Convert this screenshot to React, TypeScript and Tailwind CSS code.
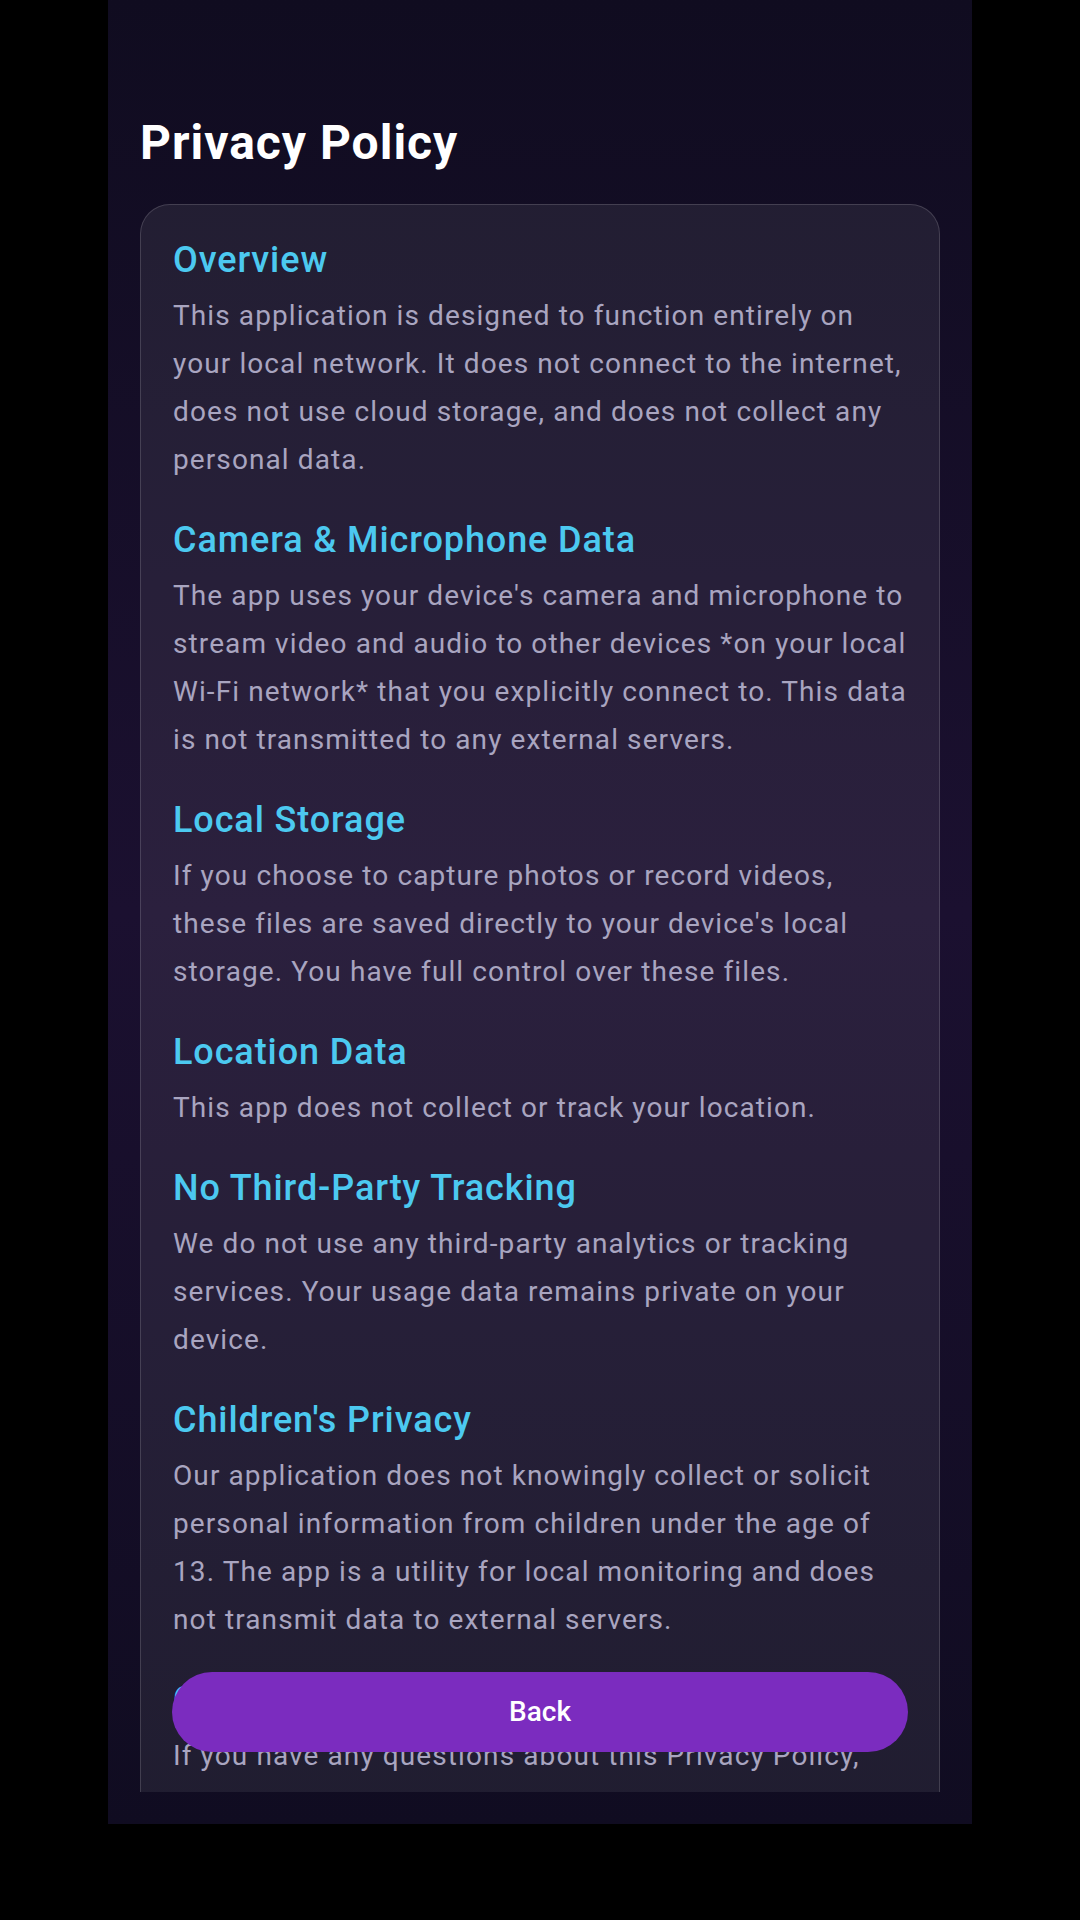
const sections = [
  {
    title: "Overview",
    body: "This application is designed to function entirely on your local network. It does not connect to the internet, does not use cloud storage, and does not collect any personal data.",
  },
  {
    title: "Camera & Microphone Data",
    body: "The app uses your device's camera and microphone to stream video and audio to other devices *on your local Wi-Fi network* that you explicitly connect to. This data is not transmitted to any external servers.",
  },
  {
    title: "Local Storage",
    body: "If you choose to capture photos or record videos, these files are saved directly to your device's local storage. You have full control over these files.",
  },
  {
    title: "Location Data",
    body: "This app does not collect or track your location.",
  },
  {
    title: "No Third-Party Tracking",
    body: "We do not use any third-party analytics or tracking services. Your usage data remains private on your device.",
  },
  {
    title: "Children's Privacy",
    body: "Our application does not knowingly collect or solicit personal information from children under the age of 13. The app is a utility for local monitoring and does not transmit data to external servers.",
  },
  {
    title: "Contact Us",
    body: "If you have any questions about this Privacy Policy, please contact us through the app's support page.",
  },
];

export default function App() {
  return (
    <div className="flex h-[1920px] w-[1080px] justify-center bg-black font-[Roboto,sans-serif]">
      <div className="relative flex h-[1824px] w-[864px] flex-col bg-gradient-to-b from-[#100c20] via-[#1b1030] to-[#100c21] px-8 pb-8">
        <h1 className="mt-[115px] text-[48px] leading-[56px] font-bold tracking-[1px] text-white">Privacy Policy</h1>

        <div className="mt-[33px] min-h-0 flex-1 overflow-hidden">
          <div className="flex flex-col gap-[34px] rounded-[30px] border border-white/15 bg-white/[0.07] px-8 pt-[33px] pb-8">
            {sections.map((s) => (
              <section key={s.title}>
                <h2 className="text-[36px] leading-[44px] font-medium tracking-[0.9px] text-[#4cc9f0]">{s.title}</h2>
                <p className="mt-[10px] text-[28px] leading-[48px] tracking-[1.1px] text-[#a9a5c0]">{s.body}</p>
              </section>
            ))}
          </div>
        </div>

        <button className="absolute right-16 bottom-[72px] left-16 flex h-20 items-center justify-center rounded-full bg-[#7b2cbf] text-[28px] font-medium text-white">
          Back
        </button>
      </div>
    </div>
  );
}
